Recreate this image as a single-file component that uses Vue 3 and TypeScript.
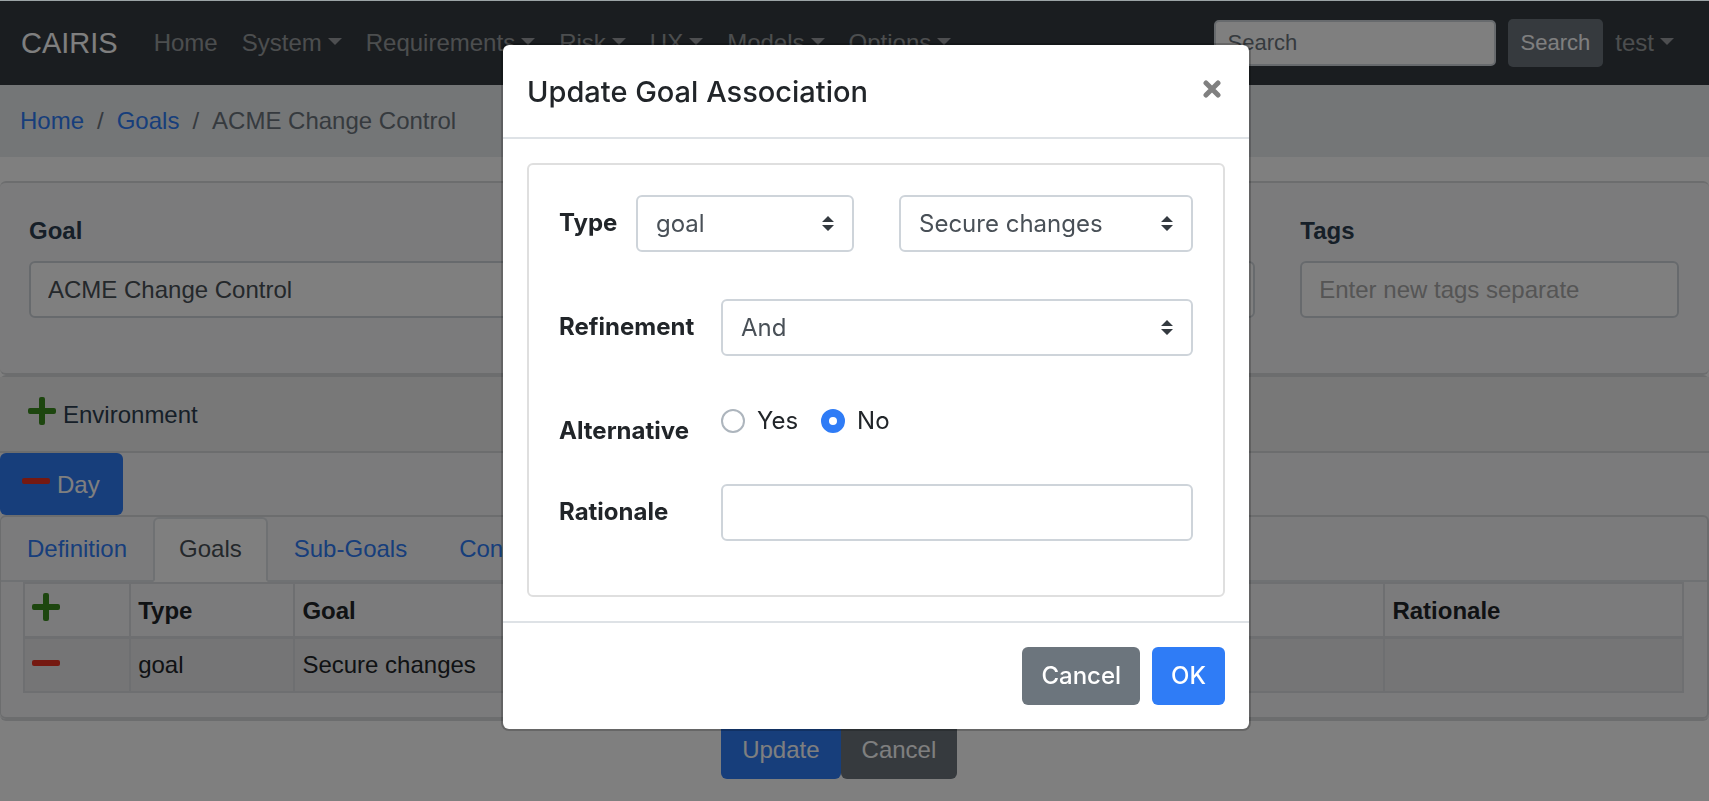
<script setup lang="ts">
import { ref } from 'vue'

interface NavEntry { label: string; menu: boolean }

const navEntries: NavEntry[] = [
  { label: 'Home', menu: false },
  { label: 'System', menu: true },
  { label: 'Requirements', menu: true },
  { label: 'Risk', menu: true },
  { label: 'UX', menu: true },
  { label: 'Models', menu: true },
  { label: 'Options', menu: true },
]

const tabs: string[] = ['Definition', 'Goals', 'Sub-Goals', 'Concerns']
const activeTab = ref('Goals')

const searchText = ref('')
const goalName = ref('ACME Change Control')
const tagText = ref('')

const goalType = ref('goal')
const goalTarget = ref('Secure changes')
const refinement = ref('And')
const alternative = ref('No')
const rationale = ref('')

const goalTypes: string[] = ['goal', 'requirement', 'task', 'usecase']
const refinements: string[] = ['And', 'Or', 'Conflict', 'Responsible']
const alternatives: string[] = ['Yes', 'No']
</script>

<template>
  <div class="page">
    <header class="navbar">
      <a class="brand" href="#">CAIRIS</a>
      <nav class="nav-links" aria-label="Main">
        <a v-for="entry in navEntries" :key="entry.label" class="nav-link" href="#">
          {{ entry.label }}<span v-if="entry.menu" class="caret"></span>
        </a>
      </nav>
      <form class="search" @submit.prevent>
        <input v-model="searchText" class="search-input" type="text" placeholder="Search" aria-label="Search">
        <button class="search-button" type="submit">Search</button>
      </form>
      <a class="nav-link" href="#">test<span class="caret"></span></a>
    </header>

    <nav class="breadcrumb" aria-label="Breadcrumb">
      <a href="#">Home</a>
      <span>/</span>
      <a href="#">Goals</a>
      <span>/</span>
      <span>ACME Change Control</span>
    </nav>

    <main>
      <section class="card goal-card">
        <div class="field field-goal">
          <label for="goal-name">Goal</label>
          <input id="goal-name" v-model="goalName" class="text-input" type="text">
        </div>
        <div class="field field-tags">
          <label for="goal-tags">Tags</label>
          <input id="goal-tags" v-model="tagText" class="text-input" type="text" placeholder="Enter new tags separate">
        </div>
      </section>

      <section class="card env-card">
        <div class="env-header">
          <button class="icon-button" type="button" aria-label="Add environment">
            <svg class="icon plus" viewBox="0 0 28 28"><path d="M13 0h2a2 2 0 0 1 2 2v9h9a2 2 0 0 1 2 2v2a2 2 0 0 1-2 2h-9v9a2 2 0 0 1-2 2h-2a2 2 0 0 1-2-2v-9H2a2 2 0 0 1-2-2v-2a2 2 0 0 1 2-2h9V2a2 2 0 0 1 2-2z" /></svg>
          </button>
          <span>Environment</span>
        </div>
        <button class="env-pill" type="button">
          <svg class="icon minus" viewBox="0 0 28 28"><rect x="0" y="11" width="28" height="6" rx="2" /></svg>
          <span>Day</span>
        </button>

        <div class="tab-card">
          <div class="tabs" role="tablist">
            <a
              v-for="tab in tabs"
              :key="tab"
              class="tab"
              :class="{ active: tab === activeTab }"
              role="tab"
              :aria-selected="tab === activeTab"
              href="#"
              @click.prevent="activeTab = tab"
            >{{ tab }}</a>
          </div>
          <div class="pane">
            <table>
              <thead>
                <tr>
                  <th class="col-action">
                    <button class="icon-button" type="button" aria-label="Add goal association">
                      <svg class="icon plus" viewBox="0 0 28 28"><path d="M13 0h2a2 2 0 0 1 2 2v9h9a2 2 0 0 1 2 2v2a2 2 0 0 1-2 2h-9v9a2 2 0 0 1-2 2h-2a2 2 0 0 1-2-2v-9H2a2 2 0 0 1-2-2v-2a2 2 0 0 1 2-2h9V2a2 2 0 0 1 2-2z" /></svg>
                    </button>
                  </th>
                  <th class="col-type">Type</th>
                  <th class="col-goal">Goal</th>
                  <th class="col-refinement">Refinement</th>
                  <th>Alternative</th>
                  <th class="col-rationale">Rationale</th>
                </tr>
              </thead>
              <tbody>
                <tr>
                  <td class="action-cell">
                    <button class="icon-button" type="button" aria-label="Remove goal association">
                      <svg class="icon minus" viewBox="0 0 28 28"><rect x="0" y="11" width="28" height="6" rx="2" /></svg>
                    </button>
                  </td>
                  <td>goal</td>
                  <td>Secure changes</td>
                  <td>and</td>
                  <td>No</td>
                  <td></td>
                </tr>
              </tbody>
            </table>
          </div>
        </div>
      </section>

      <div class="page-actions">
        <button class="btn btn-primary" type="button">Update</button>
        <button class="btn btn-secondary" type="button">Cancel</button>
      </div>
    </main>

    <div class="backdrop">
      <div class="modal" role="dialog" aria-modal="true" aria-labelledby="modal-title">
        <header class="modal-header">
          <h5 id="modal-title">Update Goal Association</h5>
          <button class="close" type="button" aria-label="Close">
            <svg viewBox="0 0 18 18"><path d="M3 3l12 12M15 3L3 15" /></svg>
          </button>
        </header>

        <div class="modal-body">
          <form class="form-card" @submit.prevent>
            <div class="row">
              <label class="type-label" for="assoc-type">Type</label>
              <div class="select type-select">
                <select id="assoc-type" v-model="goalType">
                  <option v-for="t in goalTypes" :key="t">{{ t }}</option>
                </select>
                <svg class="arrows" viewBox="0 0 4 5"><path d="M2 0L0 2h4zm0 5L0 3h4z" /></svg>
              </div>
              <div class="select grow">
                <select v-model="goalTarget" aria-label="Goal">
                  <option>Secure changes</option>
                </select>
                <svg class="arrows" viewBox="0 0 4 5"><path d="M2 0L0 2h4zm0 5L0 3h4z" /></svg>
              </div>
            </div>

            <div class="row">
              <label class="row-label" for="assoc-refinement">Refinement</label>
              <div class="select grow">
                <select id="assoc-refinement" v-model="refinement">
                  <option v-for="r in refinements" :key="r">{{ r }}</option>
                </select>
                <svg class="arrows" viewBox="0 0 4 5"><path d="M2 0L0 2h4zm0 5L0 3h4z" /></svg>
              </div>
            </div>

            <div class="row row-radio" role="radiogroup" aria-labelledby="alt-label">
              <span id="alt-label" class="row-label">Alternative</span>
              <label v-for="a in alternatives" :key="a" class="radio">
                <input v-model="alternative" type="radio" name="alternative" :value="a">
                <span>{{ a }}</span>
              </label>
            </div>

            <div class="row">
              <label class="row-label" for="assoc-rationale">Rationale</label>
              <input id="assoc-rationale" v-model="rationale" class="text-input grow" type="text">
            </div>
          </form>
        </div>

        <footer class="modal-footer">
          <button class="btn btn-secondary" type="button">Cancel</button>
          <button class="btn btn-primary" type="button">OK</button>
        </footer>
      </div>
    </div>
  </div>
</template>

<style>
body {
  background: #fff;
}
</style>

<style scoped>
* {
  box-sizing: border-box;
}

.page {
  min-height: 100vh;
  border-top: 1px solid #9ca4a6;
  background: #fff;
  color: #212529;
  font: 24px/36px "Liberation Sans", Arial, sans-serif;
}

a {
  color: #2f7cf6;
  text-decoration: none;
}

button,
input,
select {
  font: inherit;
}

.navbar {
  display: flex;
  align-items: center;
  height: 84px;
  padding: 0 23px 0 21px;
  background: #343a40;
}

.brand {
  margin-right: 24px;
  color: #fff;
  font-size: 29px;
}

.nav-links {
  display: flex;
  flex: 1;
}

.nav-link {
  padding: 0 12px;
  color: rgba(255, 255, 255, 0.5);
  white-space: nowrap;
}

.caret {
  display: inline-block;
  margin-left: 6px;
  border: 7px solid transparent;
  border-top-color: currentColor;
  border-bottom: 0;
  vertical-align: 6px;
}

.search {
  display: flex;
  align-items: center;
  gap: 12px;
  font-size: 22px;
  line-height: 32px;
}

.search-input {
  width: 282px;
  height: 46px;
  padding: 0 12px;
  border: 2px solid #ced4da;
  border-radius: 5px;
  background: #fff;
}

.search-input::placeholder {
  color: #6c757d;
  opacity: 1;
}

.search-button {
  height: 48px;
  padding: 0 13px;
  border: 0;
  border-radius: 5px;
  background: #6c757d;
  color: #fff;
}

.breadcrumb {
  display: flex;
  gap: 13px;
  margin-bottom: 24px;
  padding: 18px 20px;
  background: #e9ecef;
  color: #6c757d;
}

.card {
  border: solid #d8dadd;
  border-width: 2px 0;
  border-radius: 6px;
  background: #f7f7f9;
}

.goal-card {
  display: grid;
  grid-template-columns: repeat(12, 1fr);
  gap: 45px;
  padding: 30px 30px 55px 29px;
}

.field {
  display: flex;
  flex-direction: column;
  gap: 12px;
}

.field-goal {
  grid-column: span 9;
}

.field-tags {
  grid-column: span 3;
}

.field label {
  color: #2c3e50;
  font-weight: bold;
}

.text-input {
  width: 100%;
  min-width: 0;
  height: 57px;
  padding: 0 17px;
  border: 2px solid #ced4da;
  border-radius: 6px;
  background: #fff;
  color: #495057;
}

.text-input::placeholder {
  color: #aaa;
  opacity: 1;
}

.env-header {
  display: flex;
  gap: 7px;
  padding: 20px 28px 18px;
  border-bottom: 2px solid #d8dadd;
  background: #f1f1f1;
  color: #2c3e50;
}

.icon-button {
  display: block;
  padding: 0;
  border: 0;
  background: none;
}

.icon {
  display: block;
  width: 28px;
  height: 28px;
  margin-bottom: 8px;
}

.plus {
  fill: #3b8c1e;
}

.minus {
  fill: #ea3323;
}

.env-pill {
  display: flex;
  gap: 7px;
  padding: 14px 23px 12px 22px;
  border: 0;
  border-radius: 6px;
  background: #2f7cf6;
  color: #fff;
}

.tab-card {
  border: 2px solid #d8dadd;
  border-left-width: 1px;
  border-radius: 6px;
}

.tabs {
  display: flex;
  border-bottom: 2px solid #dee2e6;
}

.tab {
  margin-bottom: -2px;
  padding: 12px 24px 13px;
  border: 2px solid transparent;
  border-radius: 6px 6px 0 0;
}

.tab.active {
  border-color: #dee2e6 #dee2e6 #fff;
  background: #fff;
  color: #495057;
}

.pane {
  padding: 0 23px 24px 22px;
}

table {
  width: 100%;
  border-collapse: collapse;
  table-layout: fixed;
}

th,
td {
  height: 54px;
  padding: 8px 7px;
  border: 2px solid #dcdfe2;
  text-align: left;
  vertical-align: top;
}

thead th {
  padding: 9px 7px 7px;
  border-bottom-width: 3px;
}

tbody tr {
  background: rgba(0, 0, 0, 0.05);
}

td.action-cell {
  padding: 10px 7px 6px;
}

.col-action {
  width: 6.4%;
}

.col-type {
  width: 9.9%;
}

.col-goal,
.col-refinement,
.col-rationale {
  width: 18%;
}

.page-actions {
  display: flex;
  padding-left: 42.2%;
}

.btn {
  height: 58px;
  padding: 0 20px;
  border: 0;
  border-radius: 6px;
  color: #fff;
}

.page-actions .btn {
  padding: 0 21px;
}

.btn-primary {
  background: #2f7cf6;
}

.btn-secondary {
  background: #6c757d;
}

.backdrop {
  position: fixed;
  inset: 1px 0 0;
  display: flex;
  align-items: flex-start;
  justify-content: center;
  padding: 42px 0 42px 43px;
  background: rgba(0, 0, 0, 0.5);
}

.modal {
  width: 750px;
  max-width: 100%;
  border: 2px solid rgba(0, 0, 0, 0.2);
  border-radius: 8px;
  background: #fff;
  background-clip: padding-box;
  font-family: Inter, "Liberation Sans", sans-serif;
}

.modal-header {
  display: flex;
  align-items: center;
  justify-content: space-between;
  padding: 25px 24px 23px;
  border-bottom: 2px solid #dee2e6;
}

h5 {
  margin: 0;
  font-size: 29px;
  font-weight: 500;
  line-height: 44px;
}

.close {
  padding: 0 4px 6px;
  border: 0;
  background: none;
}

.close svg {
  display: block;
  width: 18px;
  height: 18px;
  fill: none;
  stroke: #808080;
  stroke-width: 5;
  stroke-linecap: round;
}

.modal-body {
  padding: 24px;
}

.form-card {
  padding: 30px 30px 54px;
  border: 2px solid #dfdfdf;
  border-radius: 6px;
}

.row {
  display: flex;
  align-items: flex-start;
  margin-bottom: 47px;
}

.row:last-child {
  margin-bottom: 0;
}

.row-radio {
  margin-bottom: 33px;
}

.type-label,
.row-label {
  flex: none;
  width: 162px;
  padding: 10px 0 2px;
  font-weight: bold;
}

.type-label {
  width: 77px;
}

.select {
  position: relative;
}

.type-select {
  width: 218px;
  margin-right: 45px;
}

.grow {
  flex: 1;
}

select {
  display: block;
  width: 100%;
  height: 57px;
  padding: 0 42px 0 18px;
  border: 2px solid #ced4da;
  border-radius: 6px;
  background: #fff;
  color: #495057;
  appearance: none;
}

.arrows {
  position: absolute;
  top: 21px;
  right: 20px;
  width: 12px;
  height: 15px;
  fill: #343a40;
  pointer-events: none;
}

.radio {
  display: flex;
  align-items: center;
  gap: 12px;
  margin-right: 23px;
}

.radio input {
  width: 24px;
  height: 24px;
  margin: 0;
  border: 2px solid #adb5bd;
  border-radius: 50%;
  background: #fff;
  appearance: none;
}

.radio input:checked {
  border: 8px solid #2f7cf6;
}

.modal-footer {
  display: flex;
  justify-content: flex-end;
  gap: 12px;
  padding: 24px;
  border-top: 2px solid #dee2e6;
}

.modal-footer .btn {
  padding: 0 19px;
  font-weight: 500;
}
</style>
